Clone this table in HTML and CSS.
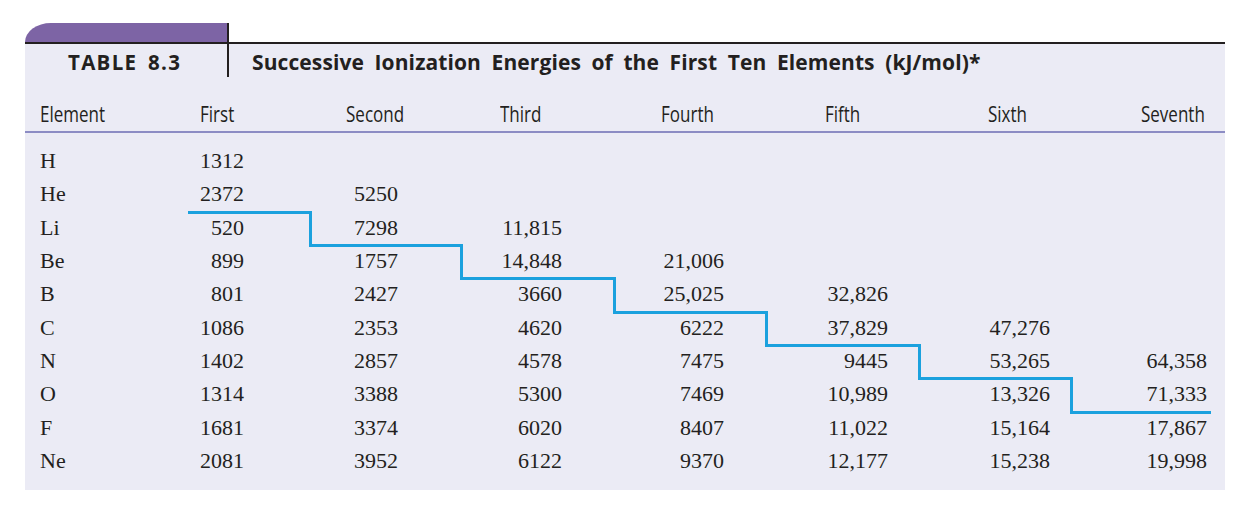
FILE: index.html
```html
<!DOCTYPE html>
<html lang="en">
<head>
<meta charset="utf-8">
<title>Table 8.3 – Successive Ionization Energies</title>
<link rel="stylesheet" href="styles.css">
</head>
<body>
<div class="sheet">
  <div class="caption">
    <div class="tab"></div>
    <div class="tab-gap"></div>
    <div class="rule"></div>
    <div class="label">TABLE 8.3</div>
    <div class="title">Successive Ionization Energies of the First Ten Elements (kJ/mol)*</div>
  </div>
  <div class="body">
    <div class="grid thead">
      <div class="h c0"><span>Element</span></div>
      <div class="h c1"><span>First</span></div>
      <div class="h c2"><span>Second</span></div>
      <div class="h c3"><span>Third</span></div>
      <div class="h c4"><span>Fourth</span></div>
      <div class="h c5"><span>Fifth</span></div>
      <div class="h c6"><span>Sixth</span></div>
      <div class="h c7"><span>Seventh</span></div>
    </div>
    <div class="grid tbody">
      <div class="row"><div class="d c0">H</div><div class="d c1">1312</div><div class="d c2"></div><div class="d c3"></div><div class="d c4"></div><div class="d c5"></div><div class="d c6"></div><div class="d c7"></div></div>
      <div class="row"><div class="d c0">He</div><div class="d c1">2372</div><div class="d c2">5250</div><div class="d c3"></div><div class="d c4"></div><div class="d c5"></div><div class="d c6"></div><div class="d c7"></div></div>
      <div class="row"><div class="d c0">Li</div><div class="d c1 st">520</div><div class="d c2 sl">7298</div><div class="d c3">11,815</div><div class="d c4"></div><div class="d c5"></div><div class="d c6"></div><div class="d c7"></div></div>
      <div class="row"><div class="d c0">Be</div><div class="d c1">899</div><div class="d c2 st">1757</div><div class="d c3 sl">14,848</div><div class="d c4">21,006</div><div class="d c5"></div><div class="d c6"></div><div class="d c7"></div></div>
      <div class="row"><div class="d c0">B</div><div class="d c1">801</div><div class="d c2">2427</div><div class="d c3 st">3660</div><div class="d c4 sl">25,025</div><div class="d c5">32,826</div><div class="d c6"></div><div class="d c7"></div></div>
      <div class="row"><div class="d c0">C</div><div class="d c1">1086</div><div class="d c2">2353</div><div class="d c3">4620</div><div class="d c4 st">6222</div><div class="d c5 sl">37,829</div><div class="d c6">47,276</div><div class="d c7"></div></div>
      <div class="row"><div class="d c0">N</div><div class="d c1">1402</div><div class="d c2">2857</div><div class="d c3">4578</div><div class="d c4">7475</div><div class="d c5 st">9445</div><div class="d c6 sl">53,265</div><div class="d c7">64,358</div></div>
      <div class="row"><div class="d c0">O</div><div class="d c1">1314</div><div class="d c2">3388</div><div class="d c3">5300</div><div class="d c4">7469</div><div class="d c5">10,989</div><div class="d c6 st">13,326</div><div class="d c7 sl">71,333</div></div>
      <div class="row"><div class="d c0">F</div><div class="d c1">1681</div><div class="d c2">3374</div><div class="d c3">6020</div><div class="d c4">8407</div><div class="d c5">11,022</div><div class="d c6">15,164</div><div class="d c7 st">17,867</div></div>
      <div class="row"><div class="d c0">Ne</div><div class="d c1">2081</div><div class="d c2">3952</div><div class="d c3">6122</div><div class="d c4">9370</div><div class="d c5">12,177</div><div class="d c6">15,238</div><div class="d c7">19,998</div></div>
    </div>
  </div>
</div>
</body>
</html>
```
FILE: styles.css
```css
* { box-sizing: border-box; }

html, body {
  margin: 0;
  background: #ffffff;
}

body {
  padding: 23px 0 0 25px;
  color: #231f20;
}

.sheet {
  width: 1200px;
}

/* ---------- caption ---------- */
.caption {
  display: grid;
  grid-template-columns: 202px 1fr;
  grid-template-rows: 19px 2px 33px;
}

.tab {
  background: #7d64a5;
  border-top-left-radius: 26px 19px;
}

.tab-gap {
  border-left: 2px solid #231f20;
}

.rule {
  grid-column: 1 / 3;
  background: #231f20;
}

.label,
.title {
  background: #ebebf5;
  font-family: "Open Sans", "DejaVu Sans", sans-serif;
  font-weight: 700;
  font-size: 20.5px;
  line-height: 22px;
  padding-top: 7px;
  white-space: nowrap;
}

.label {
  padding-left: 43px;
  letter-spacing: 1.3px;
  word-spacing: 4px;
}

.title {
  border-left: 2px solid #231f20;
  padding-left: 23px;
  font-size: 21px;
  letter-spacing: 0.1px;
  word-spacing: 5px;
}

/* ---------- table body ---------- */
.body {
  background: #ebebf5;
  padding-bottom: 13px;
}

.grid {
  display: grid;
  grid-template-columns: 163px 121px 151px 153px 152px 153px 152px 141px;
  padding-right: 14px;
}

.thead {
  height: 56px;
  align-items: end;
  padding-bottom: 5px;
  border-bottom: 2px solid #8c8cc4;
}

.h {
  font-family: "Open Sans", "Noto Sans", sans-serif;
  font-size: 21px;
  line-height: 24px;
  white-space: nowrap;
}

/* condensed humanist sans look */
.h span {
  display: inline-block;
  transform: scaleX(0.81);
  transform-origin: left center;
}

.h.c7 span {
  transform-origin: right center;
}

.tbody {
  padding-top: 11px;
  grid-auto-rows: 33.33px;
}

.row {
  display: contents;
}

.d {
  font-family: "Liberation Serif", "DejaVu Serif", serif;
  font-size: 22px;
  line-height: 33.33px;
  text-align: right;
  white-space: nowrap;
}

/* column alignment */
.c0 { text-align: left; padding-left: 15px; }
.h.c1 { padding-left: 12px; }
.h.c2 { padding-left: 37px; }
.h.c3 { padding-left: 40px; }
.h.c4 { padding-left: 48px; }
.h.c5 { padding-left: 60px; }
.h.c6 { padding-left: 70px; }
.h.c7 { text-align: right; padding-right: 6px; }

.d.c1 { padding-right: 65px; }
.d.c2 { padding-right: 62px; }
.d.c3 { padding-right: 51px; }
.d.c4 { padding-right: 41px; }
.d.c5 { padding-right: 30px; }
.d.c6 { padding-right: 20px; }
.d.c7 { padding-right: 4px; }

/* staircase separating valence from core electrons */
.st { box-shadow: inset 0 3px 0 #1ba1de; }
.sl { box-shadow: inset 3px 0 0 #1ba1de; }
```
